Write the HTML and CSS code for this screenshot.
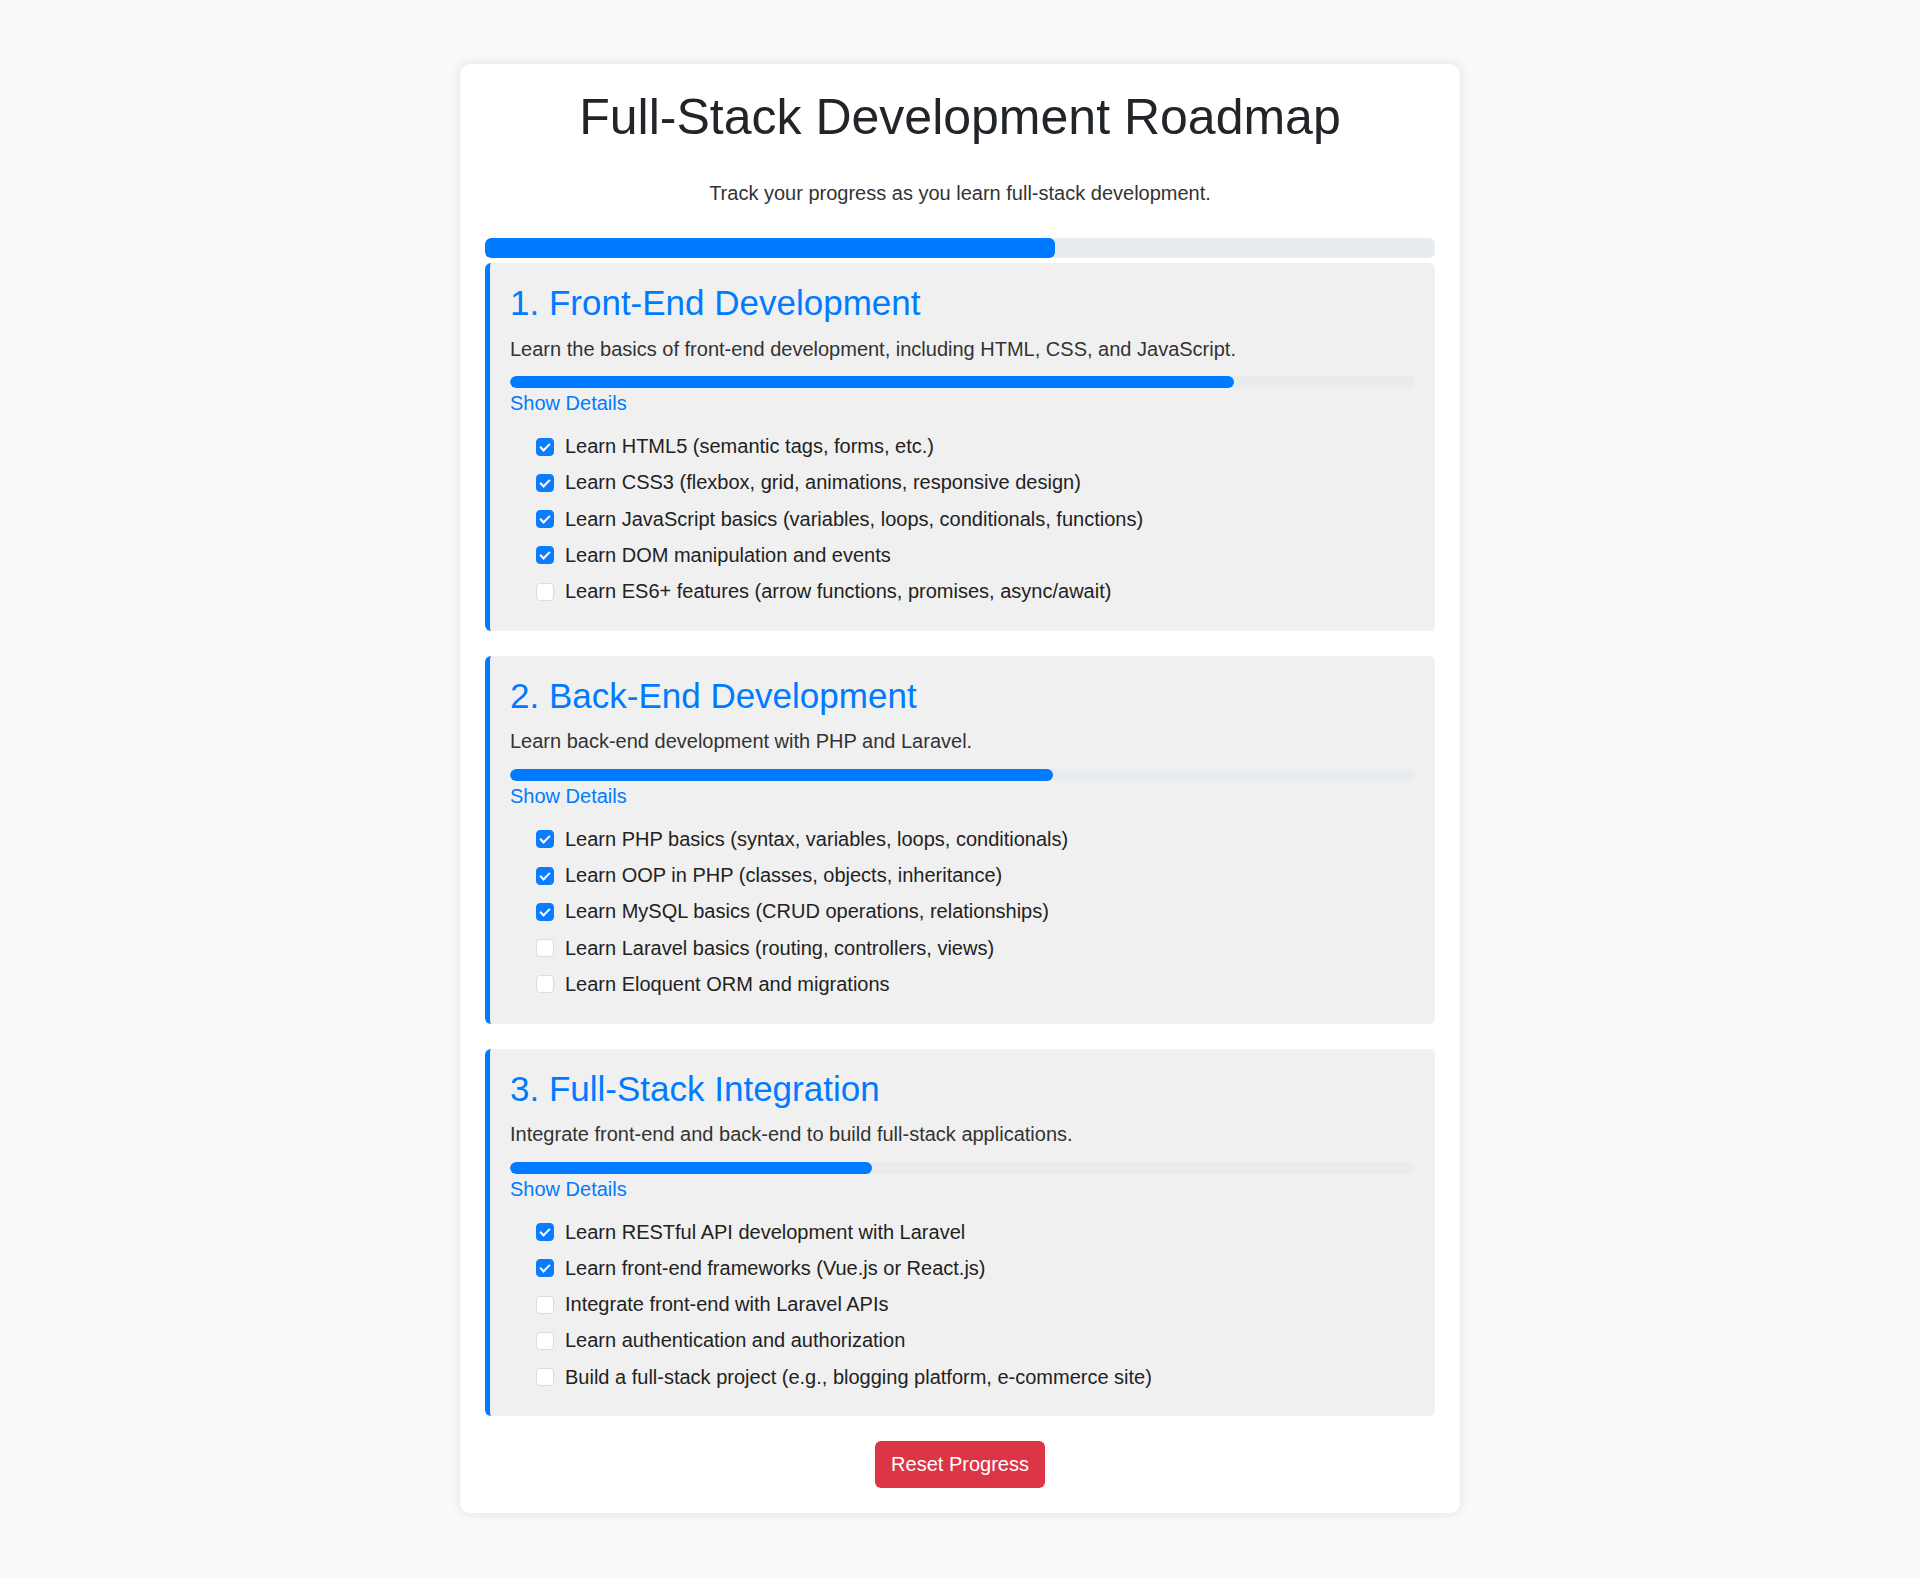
FILE: index.html
```html
<!DOCTYPE html>
<html lang="en">
<head>
<meta charset="utf-8">
<title>Full-Stack Development Roadmap</title>
<link rel="stylesheet" href="styles.css">
</head>
<body>
<main class="card">
  <h1 class="title">Full-Stack Development Roadmap</h1>
  <p class="subtitle">Track your progress as you learn full-stack development.</p>
  <div class="progress progress-main"><div class="progress-fill" style="width:60%"></div></div>

  <section class="stage">
    <h2 class="stage-title">1. Front-End Development</h2>
    <p class="stage-desc">Learn the basics of front-end development, including HTML, CSS, and JavaScript.</p>
    <div class="progress progress-stage"><div class="progress-fill" style="width:80%"></div></div>
    <a class="toggle">Show Details</a>
    <ul class="tasks">
      <li class="task"><input type="checkbox" class="check" checked><span>Learn HTML5 (semantic tags, forms, etc.)</span></li>
      <li class="task"><input type="checkbox" class="check" checked><span>Learn CSS3 (flexbox, grid, animations, responsive design)</span></li>
      <li class="task"><input type="checkbox" class="check" checked><span>Learn JavaScript basics (variables, loops, conditionals, functions)</span></li>
      <li class="task"><input type="checkbox" class="check" checked><span>Learn DOM manipulation and events</span></li>
      <li class="task"><input type="checkbox" class="check"><span>Learn ES6+ features (arrow functions, promises, async/await)</span></li>
    </ul>
  </section>

  <section class="stage">
    <h2 class="stage-title">2. Back-End Development</h2>
    <p class="stage-desc">Learn back-end development with PHP and Laravel.</p>
    <div class="progress progress-stage"><div class="progress-fill" style="width:60%"></div></div>
    <a class="toggle">Show Details</a>
    <ul class="tasks">
      <li class="task"><input type="checkbox" class="check" checked><span>Learn PHP basics (syntax, variables, loops, conditionals)</span></li>
      <li class="task"><input type="checkbox" class="check" checked><span>Learn OOP in PHP (classes, objects, inheritance)</span></li>
      <li class="task"><input type="checkbox" class="check" checked><span>Learn MySQL basics (CRUD operations, relationships)</span></li>
      <li class="task"><input type="checkbox" class="check"><span>Learn Laravel basics (routing, controllers, views)</span></li>
      <li class="task"><input type="checkbox" class="check"><span>Learn Eloquent ORM and migrations</span></li>
    </ul>
  </section>

  <section class="stage">
    <h2 class="stage-title">3. Full-Stack Integration</h2>
    <p class="stage-desc">Integrate front-end and back-end to build full-stack applications.</p>
    <div class="progress progress-stage"><div class="progress-fill" style="width:40%"></div></div>
    <a class="toggle">Show Details</a>
    <ul class="tasks">
      <li class="task"><input type="checkbox" class="check" checked><span>Learn RESTful API development with Laravel</span></li>
      <li class="task"><input type="checkbox" class="check" checked><span>Learn front-end frameworks (Vue.js or React.js)</span></li>
      <li class="task"><input type="checkbox" class="check"><span>Integrate front-end with Laravel APIs</span></li>
      <li class="task"><input type="checkbox" class="check"><span>Learn authentication and authorization</span></li>
      <li class="task"><input type="checkbox" class="check"><span>Build a full-stack project (e.g., blogging platform, e-commerce site)</span></li>
    </ul>
  </section>

  <div class="actions">
    <button class="reset">Reset Progress</button>
  </div>
</main>
</body>
</html>
```

FILE: styles.css
```css
* {
  box-sizing: border-box;
}

html, body {
  margin: 0;
  padding: 0;
}

body {
  background: #f8f9fa;
  font-family: "Liberation Sans", Arial, sans-serif;
  color: #333;
  font-size: 20px;
}

.card {
  display: block;
  max-width: 1000px;
  margin: 64px auto;
  padding: 25px;
  background: #fff;
  border-radius: 10px;
  box-shadow: 0 0 12px rgba(0, 0, 0, 0.1);
}

.title {
  margin: 0 0 36px;
  font-size: 50px;
  line-height: 57px;
  font-weight: 400;
  text-align: center;
  color: #212529;
}

.subtitle {
  margin: 0 0 33px;
  line-height: 23px;
  text-align: center;
  color: #333;
}

.progress {
  background: #e9ecef;
  border-radius: 6px;
  overflow: hidden;
}

.progress-fill {
  height: 100%;
  background: #007bff;
  border-radius: 6px;
}

.progress-main {
  height: 20px;
  margin-bottom: 5px;
}

.progress-stage {
  height: 12px;
  margin-bottom: 4px;
}

.stage {
  background: #f0f0f0;
  border-left: 5px solid #007bff;
  border-radius: 6px;
  padding: 20px;
  margin-bottom: 25px;
}

.stage-title {
  margin: 0 0 14.5px;
  font-size: 35px;
  line-height: 40px;
  font-weight: 400;
  color: #007bff;
}

.stage-desc {
  margin: 0 0 15.5px;
  line-height: 23px;
  color: #333;
}

.toggle {
  display: block;
  line-height: 23px;
  color: #007bff;
  cursor: pointer;
}

.tasks {
  list-style: none;
  margin: 13.5px 0 1px;
  padding: 0 0 0 26px;
}

.task {
  display: flex;
  align-items: center;
  height: 36.25px;
  line-height: 23px;
  color: #222;
}

.check {
  appearance: none;
  -webkit-appearance: none;
  position: relative;
  width: 18px;
  height: 18px;
  margin: 0 11px 0 0;
  flex: none;
  background: #fff;
  border: 1px solid #dcdcdc;
  border-radius: 4px;
}

.check:checked {
  background: #0a7cff;
  border-color: #0a7cff;
}

.check:checked::after {
  content: "";
  position: absolute;
  left: 5px;
  top: 2px;
  width: 4px;
  height: 8px;
  border: solid #fff;
  border-width: 0 2.5px 2.5px 0;
  transform: rotate(45deg);
}

.actions {
  text-align: center;
}

.reset {
  font-family: "Liberation Sans", Arial, sans-serif;
  font-size: 20px;
  line-height: 23px;
  padding: 12px 16px;
  color: #fff;
  background: #dc3545;
  border: none;
  border-radius: 6px;
  cursor: pointer;
}
```
